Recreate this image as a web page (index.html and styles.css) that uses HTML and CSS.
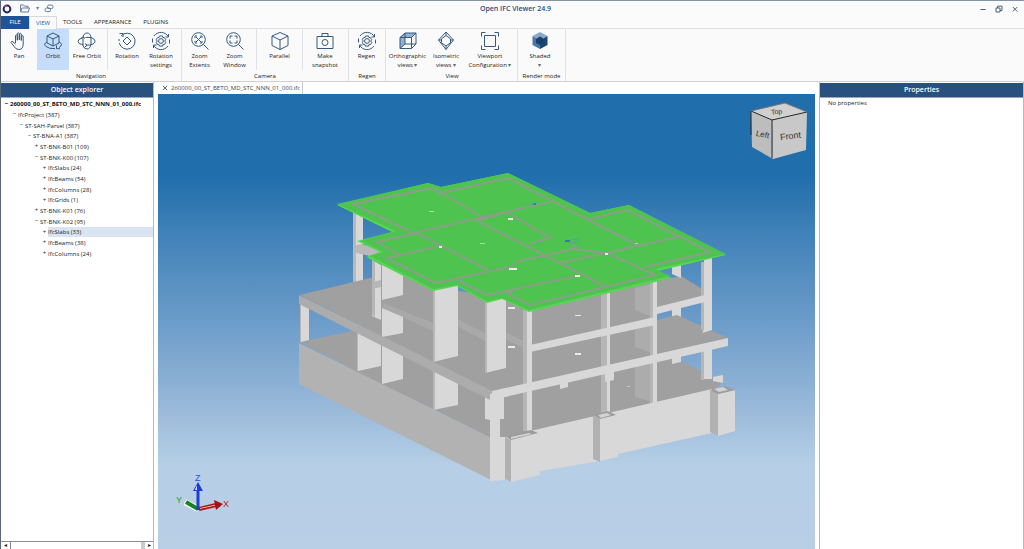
FILE: index.html
```html
<!DOCTYPE html>
<html lang="en">
<head>
<meta charset="utf-8">
<title>Open IFC Viewer 24.9</title>
<link rel="stylesheet" href="styles.css">
</head>
<body>
<div class="app">
  <header class="titlebar">
    <div class="quick">
      <svg class="logo" viewBox="0 0 10 10"><circle cx="5" cy="5" r="3.4" fill="none" stroke="#1d2a6b" stroke-width="2"/><path d="M2.2 3.2A3.4 3.4 0 0 1 5 1.6" fill="none" stroke="#b0486c" stroke-width="1.6"/></svg>
      <button class="quick-btn" aria-label="Open"><svg width="10" height="9" viewBox="0 0 10 9"><path d="M.6 8V1h3l1 1.200H8V4M.6 8L2 4h7.500L8.200 8z"/></svg></button>
      <button class="quick-btn caret" aria-label="Recent files">▾</button>
      <button class="quick-btn" aria-label="Link"><svg width="10" height="9" viewBox="0 0 10 9"><rect x="3.500" y="1" width="5.500" height="3.600" rx="1.500"/><rect x="1" y="4" width="5.500" height="3.600" rx="1.500"/></svg></button>
    </div>
    <h1 class="title">Open IFC Viewer 24.9</h1>
    <div class="window-buttons">
      <button aria-label="Minimize"><svg viewBox="0 0 8 8"><path d="M1.500 4.500h5"/></svg></button>
      <button aria-label="Restore"><svg viewBox="0 0 8 8"><path d="M1 3h4v4H1zM2.500 3V1.200H7V5.500H5"/></svg></button>
      <button aria-label="Close"><svg viewBox="0 0 8 8"><path d="M1.800 2l4.500 4.500M6.300 2L1.800 6.500"/></svg></button>
    </div>
  </header>

  <nav class="tabs">
    <button class="tab file">FILE</button>
    <button class="tab active">VIEW</button>
    <button class="tab">TOOLS</button>
    <button class="tab">APPEARANCE</button>
    <button class="tab">PLUGINS</button>
  </nav>

  <section class="ribbon">
    <div class="group navigation">
      <div class="tools">
        <button class="tool"><svg viewBox="0 0 20 20"><path d="M6.500 12V4.500q.9-1.500 1.800 0V9.500M8.300 9V2.500q1-1.500 2 0V9M10.300 9V3q1-1.400 2 0V9.500M12.300 9.500V5q1-1.300 1.900 0v8q0 5.500-4.500 5.500-3 0-4.500-3L2 11.500q.4-1.800 2-.6L6.500 13"/></svg><span>Pan</span></button>
        <button class="tool selected"><svg viewBox="0 0 20 20"><path d="M10 2l6 3v7l-6 3-6-3V5zM4 5l6 3 6-3M10 8v7M4 11Q0 13 3 15.500 6 18 12 17.600M16 11q5 2.500 0 5.500M13.500 14.500v3.200h3.500"/></svg><span>Orbit</span></button>
        <button class="tool"><svg viewBox="0 0 20 20"><path d="M6 7Q6.500 2 10 2t4.200 5M14 13q-.8 5-4 5t-4.200-4M5 7Q1 8 1 10.500T6 13.800M9 14.200q9 0 9-4Q18 8 15 7M8.500 6.500q4-.5 6 .3M6 6v8M14 6v7M4 7.500l2-1.700 2 1.700M8 12.500l2 1.700-2 1.800"/></svg><span>Free Orbit</span></button>
      </div>
      <div class="tools">
        <button class="tool"><svg viewBox="0 0 20 20"><path d="M4 5A8 8 0 1 1 2.300 12M6 2.500h-3.500M6 2.500V6M10 6l4 4-4 4-4-4zM2 8v2"/></svg><span>Rotation</span></button>
        <button class="tool"><svg viewBox="0 0 20 20"><use href="#gear"/></svg><span>Rotation<br>settings</span></button>
      </div>
      <h2 class="group-name">Navigation</h2>
    </div>
    <div class="group camera">
      <div class="tools">
        <button class="tool"><svg viewBox="0 0 20 20"><circle cx="8.500" cy="8.500" r="6.800"/><path d="M13.500 13.500l5 5M5 7V5h2M10 5h2v2M12 10v2h-2M7 12H5v-2M6 6l5 5M11 6l-5 5"/></svg><span>Zoom<br>Extents</span></button>
        <button class="tool"><svg viewBox="0 0 20 20"><circle cx="8.500" cy="8.500" r="6.800"/><path d="M13.500 13.500l5 5M5 7.500V5h2.500M9.500 5H12v2.500M12 9.500V12H9.500M7.500 12H5V9.500"/></svg><span>Zoom<br>Window</span></button>
      </div>
      <div class="tools">
        <button class="tool"><svg viewBox="0 0 20 20"><path d="M10 1.500l8 3.500v9.500l-8 4-8-4V5zM2 5l8 4 8-4M10 9v9.500"/></svg><span>Parallel</span></button>
      </div>
      <div class="tools">
        <button class="tool"><svg viewBox="0 0 20 20"><path d="M2 5.500h16v12H2zM7 5.500V2.500h6v3"/><circle cx="10" cy="11.500" r="3"/></svg><span>Make<br>snapshot</span></button>
      </div>
      <h2 class="group-name">Camera</h2>
    </div>
    <div class="group regen">
      <div class="tools">
        <button class="tool"><svg viewBox="0 0 20 20"><g id="gear"><path d="M3 5A8.500 8.500 0 0 1 17.500 6M17 15A8.500 8.500 0 0 1 2.500 14M14.500 6h3V3M5.500 14h-3v3M1.500 7.500v4M18.500 8.500v4"/><path d="M8.500 5h3l.4 1.500 1.600.2 1.200 2-1 1.300 1 1.500-1.200 2-1.600.2-.4 1.400h-3l-.5-1.400-1.600-.2-1.100-2 1-1.500-1-1.300 1.100-2 1.600-.2z"/><circle cx="10" cy="10" r="2.400"/></g></svg><span>Regen</span></button>
      </div>
      <h2 class="group-name">Regen</h2>
    </div>
    <div class="group view">
      <div class="tools">
        <button class="tool"><svg viewBox="0 0 20 20"><path class="tint" d="M2 6.500L7 2h11l-4.500 4.500z"/><path class="tint" d="M2 6.500L7 2v11l-5 4.500z"/><path d="M2 6.500h11.500v11H2zM13.500 6.500L18 2v11l-4.500 4.500M2 6.500L7 2M7 2h11M7 2v11L2 17.500M7 13h11"/></svg><span>Orthographic<br>views <i>▾</i></span></button>
        <button class="tool"><svg viewBox="0 0 20 20"><path d="M10 1l7.500 8-7.500 9.500L2.500 9z"/><path d="M10 4.500l4.500 3.300v4L10 15l-4.500-3.200v-4zM2.500 9h3M14.500 9h3M10 1v3.500M10 15v3.500"/></svg><span>Isometric<br>views <i>▾</i></span></button>
        <button class="tool"><svg viewBox="0 0 20 20"><path d="M4.500 4.500h11v11h-11zM1.500 5.500v-4h4M14.500 1.500h4v4M18.500 14.500v4h-4M5.500 18.500h-4v-4"/></svg><span>Viewport<br>Configuration <i>▾</i></span></button>
      </div>
      <h2 class="group-name">View</h2>
    </div>
    <div class="group render">
      <div class="tools">
        <button class="tool"><svg viewBox="0 0 20 20" class="solid"><path fill="#86a9cd" d="M10 1l7.500 4L10 9.500 2.500 5z"/><path fill="#4878aa" d="M2.500 5l7.500 4.500V18l-7.500-4z"/><path fill="#1d4674" d="M17.500 5L10 9.500V18l7.500-4z"/><path fill="#1b3f68" d="M10 5.500l4 2.500v4l-4 2-4-2V8z"/></svg><span>Shaded<br><i>▾</i></span></button>
      </div>
      <h2 class="group-name">Render mode</h2>
    </div>
  </section>

  <main class="workspace">
    <aside class="panel explorer">
      <h2 class="panel-title">Object explorer</h2>
      <ul class="tree">
        <li class="l0"><button>−</button><span>260000_00_ST_BETO_MD_STC_NNN_01_000.ifc</span></li>
        <li class="l1"><button>−</button><span>IfcProject (387)</span></li>
        <li class="l2"><button>−</button><span>ST-SAH-Parsel (387)</span></li>
        <li class="l3"><button>−</button><span>ST-BNA-A1 (387)</span></li>
        <li class="l4"><button>+</button><span>ST-BNK-B01 (109)</span></li>
        <li class="l4"><button>−</button><span>ST-BNK-K00 (107)</span></li>
        <li class="l5"><button>+</button><span>IfcSlabs (24)</span></li>
        <li class="l5"><button>+</button><span>IfcBeams (54)</span></li>
        <li class="l5"><button>+</button><span>IfcColumns (28)</span></li>
        <li class="l5"><button>+</button><span>IfcGrids (1)</span></li>
        <li class="l4"><button>+</button><span>ST-BNK-K01 (76)</span></li>
        <li class="l4"><button>−</button><span>ST-BNK-K02 (95)</span></li>
        <li class="l5 current"><button>+</button><span>IfcSlabs (33)</span></li>
        <li class="l5"><button>+</button><span>IfcBeams (38)</span></li>
        <li class="l5"><button>+</button><span>IfcColumns (24)</span></li>
      </ul>
      <div class="hscroll"><button aria-label="Scroll left">◂</button><span class="track"></span><button aria-label="Scroll right">▸</button></div>
    </aside>

    <section class="document">
      <div class="doc-tab"><button aria-label="Close document"><svg viewBox="0 0 7 7"><path d="M1 1l5 5M6 1L1 6"/></svg></button><span>260000_00_ST_BETO_MD_STC_NNN_01_000.ifc</span></div>
      <div class="canvas">
        <svg class="model" viewBox="158 94 657 455">
          <g fill="#a0a0a0">
            <path d="M300 342L357 330 657 355 686 363 723 383 712 390 530 432 491 438z"/>
            <path d="M657 281L681 276 704 290V297L657 308z"/>
          </g>
          <g fill="#d8d8d8">
            <path d="M672 264h9v14l-9-4zM672 304h9v14h-9zM355 210h8v74h-8z"/>
          </g>
          <path fill="#b9b9b9" d="M353 210h3v74h-3zM353 246l9-2 20 7v8l-29-7z"/>
          <path fill="#a0a0a0" d="M300 295L370 278 657 320 677 315 728 338 492 392z"/>
          <path fill="#a0a0a0" d="M381 262L433 290 487 300 527 311 657 281V401L530 431 491 437 344 366 357 330 370 325z"/>
          <path fill="#acacac" d="M635 288l18-4v33l-18-7zM635 326l18-5v32l-18-6zM635 363l18-5v44l-18-5z"/>
          <path fill="#a9a9a9" d="M383 303L433 323V331L383 308zM455 318L485 333V341L455 325zM503 331L530 344V351L503 338z"/>
          <g fill="#d8d8d8">
            <path d="M382 262l21 13v20l-21 5z"/>
            <path d="M382 308l21 9v16l-21 4z"/>
            <path d="M357 331l24 11v24l-23 5zM382 343l21 10v26l-21 5z"/>
            <path d="M433 371l25 12v22l-25 5z"/>
            <path d="M433 288l25-5v73l-25 6zM485 301l21-5v72l-21 5z"/>
            <path d="M485 396h5v24l-5-1z"/>
            <path d="M300 303l9 4v33l-8 2z"/>
            <path d="M372 260l9 5v55l-9-4z"/>
          </g>
          <path fill="#b7b7b7" d="M372 258h3v59l-3-2zM433 289h2v73h-2zM485 301h2v72h-2zM433 371h2v39h-2zM357 331h1v40h-1zM372 282l9-2v7l-9 2zM300 303h1v39h-1z"/>
          <path fill="#acacac" d="M299 295L492 391V401L299 304z"/>
          <path fill="#b2b2b2" d="M299 343L491 438V480L299 384z"/>
          <path fill="#b6b6b6" d="M523 310h5v121h-5zM601 294h6v122h-6zM650 283h3v121h-3zM701 262h3v68h-3zM701 350h3v30h-3z"/>
          <g fill="#d8d8d8">
            <path d="M527 309h5v122h-5zM607 292h3v122h-3zM653 280h4v123h-4z"/>
            <path d="M704 257h8v73l-10 3 2-4zM704 345h8v34h-8z"/>
            <path d="M530 345L655 317V325L530 352zM657 307L705 295V302L657 314z"/>
            <path d="M492 391L728 338V346L492 400z"/>
            <path d="M490 394l14-3v89l-14 1zM560 378l8-2v11l-8 2zM605 370h9v10l-9 2zM672 357l9-2v7l-9 2z"/>
            <path d="M504 437L530 431 712 389V433L618 454V457L600 461 540 471V475L511 482 504 479z"/>
            <path d="M713 377l10-2v8l-10-2z"/>
          </g>
          <path fill="#a0a0a0" d="M504 398l3-1v40h-7v-18h4z"/>
          <g>
            <path fill="#b1b1b1" d="M505 437l6 3v42l-6-3zM593 415l7 4v43l-7-3zM710 390l8 4v41l-8-3z"/>
            <path fill="#d8d8d8" d="M511 440l26-7v39l-26 10zM600 419l16-4v39l-16 7zM718 394l17-4v41l-17 5z"/>
            <path fill="#9c9c9c" d="M505 436l26-6 7 3-27 7zM593 415l15-4 8 4-16 4zM710 390l15-4 10 4-17 4z"/>
            <path fill="#d2d2d2" d="M511 437l18-4 3 1-21 5zM598 415l9-2 4 2-10 3zM714 389l9-2 5 3-9 2z"/>
          </g>
          <path class="roof-edge" d="M337 205L428 183 441 187 508 173 590 213 629 205 726 255 658 271 672 278 529 312 502 299 487 303 457 286 433 291 366 257 380 252 357 241 392 232z"/>
          <path class="roof" d="M337 204L428 183 441 187 508 173 590 213 629 205 726 254 655 269 670 276 529 310 502 298 487 301 457 285 433 289 370 256 384 252 361 241 396 231z"/>
          <g class="walls">
            <path d="M413 233L353 204 433 188 482 217M437 194L508 178 637 245M413 233L550 202M400 255L377 242 417 233 488 270M435 283L387 258 440 246M435 283L510 267 520 261 573 249 607 253 677 237M477 221L607 287M477 221L507 212 550 238 530 244M457 280L487 295 577 276M590 219L627 210 710 252 645 267M560 263L607 253 655 275 530 305 507 293 515 290M570 240L577 249"/>
          </g>
          <path class="specks" d="M508 218h5v2h-5zM439 246h3v2h-3zM509 268h8v2h-8zM508 307h7v2h-7zM575 275h5v2h-5zM605 253h3v2h-3zM575 315h6v1h-6zM575 353h6v2h-6zM508 346h7v2h-7z"/>
          <path fill="#a5dda3" d="M480 243h5v1h-5zM429 211h5v1h-5zM635 243h3v1h-3zM627 386h3v1h-3z"/>
          <path fill="#2c7f9c" d="M533 203h3v2h-3zM565 240h5v2h-5z"/>
          <path fill="none" stroke="#48ad92" d="M529 205l8-3M569 243l9-1v-3l-8 1"/>
        </svg>
        <svg class="cube" viewBox="748 100 62 62">
          <path fill="#d0d0d0" d="M751 111L785 103 807 112 772 120z"/>
          <path fill="#bdbdbd" d="M751 111L772 120 773 159 752 147z"/>
          <path fill="#c8c8c8" d="M772 120L807 112 806 150 773 159z"/>
          <path fill="none" stroke="#2b2b2b" d="M751 135V111M751 111L772 120V158M772 120L807 112"/>
          <path fill="none" stroke="#777" d="M751 111L785 103 807 112"/>
          <text x="771" y="114" font-size="7" transform="rotate(-6 778 112)">Top</text>
          <text x="756" y="137" font-size="8" transform="rotate(12 762 134)">Left</text>
          <text x="780" y="139" font-size="9" transform="rotate(-7 790 136)">Front</text>
        </svg>
        <svg class="axes" viewBox="174 470 60 46">
          <path d="M198 509L185 502" stroke="#fff" stroke-width="6"/>
          <path d="M198 509L186 502" stroke="#15841f" stroke-width="4"/>
          <path d="M199 509L216 505" stroke="#b01414" stroke-width="4"/><path d="M200 508.500L216 505" stroke="#e6b0b0"/>
          <path d="M214 500l9 4-7 6z" fill="#a31212"/>
          <path d="M198 510V489" stroke="#1c3fd0" stroke-width="3"/>
          <path d="M198 482l5 9h-10z" fill="#1c3fd0"/><path d="M197 485v5h-2z" fill="#dce6ff"/>
          <text x="195" y="481" fill="#2a4fd8">Z</text><text x="223" y="507" fill="#b82020">X</text><text x="176" y="503" fill="#1f9a35">Y</text>
        </svg>
      </div>
    </section>

    <aside class="panel properties">
      <h2 class="panel-title">Properties</h2>
      <p class="empty">No properties</p>
    </aside>
  </main>
</div>
</body>
</html>
```
FILE: styles.css
```css
* { box-sizing: border-box; margin: 0; padding: 0; }

body {
  font-family: "Open Sans", "Noto Sans", sans-serif;
  font-size: 6px;
  line-height: 9px;
  color: #222;
  background: #fff;
}

button { font: inherit; color: inherit; background: none; border: 0; }
svg { display: block; }

.app {
  display: flex;
  flex-direction: column;
  height: 100vh;
  border-top: 1px solid #8593a6;
  border-left: 1px solid #5b6675;
}

.titlebar {
  display: grid;
  grid-template-columns: 1fr auto 1fr;
  align-items: center;
  height: 15px;
  flex: none;
  background: #fbfbfc;
}
.quick { display: flex; align-items: center; padding-left: 1px; }
.logo { width: 10px; height: 10px; margin-right: 8px; }
.quick-btn svg { fill: none; stroke: #5f7f9f; }
.caret { width: 14px; color: #5f7f9f; }
.title { padding-left: 6px; font-size: 7px; font-weight: 600; color: #274e7d; }
.window-buttons { display: flex; justify-content: flex-end; gap: 8px; padding-right: 5px; }
.window-buttons svg { width: 8px; height: 8px; fill: none; stroke: #46627f; }

.tabs {
  display: flex;
  flex: none;
  height: 13px;
  background: #fbfbfc;
  border-bottom: 1px solid #dcdfe3;
}
.tab { padding: 0 6px; height: 13px; }
.file { width: 28px; padding: 0; background: #1f5496; color: #fff; }
.active { width: 28px; padding: 0; color: #2c5f9c; background: #fafafa; border: 1px solid #d5d8dc; border-bottom: 0; }

.ribbon {
  display: flex;
  flex: none;
  height: 53px;
  background: #fafafa;
  border-bottom: 1px solid #cfd0d6;
}
.group { display: flex; flex-wrap: wrap; align-content: flex-start; border-right: 1px solid #dfe1e5; }
.tools { display: flex; height: 41px; }
.tools + .tools { border-left: 1px solid #dfe1e5; }
.group-name { width: 100%; font-size: 6px; font-weight: 400; text-align: center; line-height: 12px; }
.navigation { width: 181px; }
.camera { width: 167px; }
.regen { width: 37px; }
.view { width: 132px; padding-left: 1px; }
.render { width: 48px; }

.tool { display: flex; flex-direction: column; align-items: center; width: 36px; padding-top: 2px; }
.tool svg { width: 20px; height: 20px; margin-bottom: 1px; fill: none; stroke: #35597f; stroke-width: 1; }
.tool .solid { stroke: none; }
.tool .tint { fill: #8fb0d3; stroke: none; }
.tool span { text-align: center; white-space: nowrap; }
.tool i { font-style: normal; color: #666; }
.tool.selected { width: 32px; background: #c5dcfa; }
.navigation .tools:first-child { padding-right: 2px; }
.navigation .tools:nth-child(2) { padding-left: 2px; }
.navigation .tools:nth-child(2) .tool { width: 34px; }
.camera .tools:first-child { padding-right: 4px; }
.camera .tools:first-child .tool { width: 35px; }
.camera .tools:nth-child(2) .tool { width: 45px; }
.camera .tools:nth-child(3) .tool { width: 44px; }
.regen .tool { width: 35px; }
.view .tool:first-child { width: 41px; }
.view .tool:last-child { width: 52px; }
.render .tool { width: 44px; }

.workspace { display: flex; flex: 1; min-height: 0; gap: 4px; }
.panel { display: flex; flex-direction: column; padding-top: 1px; border-right: 1px solid #b5b9bf; }
.panel-title {
  flex: none;
  font-size: 7px;
  font-weight: 600;
  line-height: 14px;
  text-align: center;
  color: #fff;
  background: #28517f;
  border-bottom: 1px solid #9aa6b5;
}
.explorer { width: 153px; flex: none; }
.properties { width: 205px; flex: none; border-left: 1px solid #b5b9bf; }
.empty { padding: 1px 8px; }

.tree { display: grid; grid-template-columns: 100%; grid-auto-rows: 1fr; min-height: 160px; margin-top: 1px; list-style: none; }
.tree li { display: flex; align-items: center; white-space: nowrap; }
.tree button { width: 7px; flex: none; }
.tree span { flex: 1; line-height: 10px; }
.tree .l0 { padding-left: 2px; font-weight: 700; color: #111; }
.l1 { padding-left: 10px; }
.l2 { padding-left: 17px; }
.l3 { padding-left: 25px; }
.l4 { padding-left: 32px; }
.l5 { padding-left: 40px; }
.current span { background: #dae3f2; }

.hscroll { display: flex; height: 8px; margin-top: auto; border-top: 1px solid #8d8d8d; }
.hscroll button { width: 9px; line-height: 7px; }
.hscroll button:last-child { width: 8px; }
.track { flex: 1; border-left: 1px solid #888; border-right: 4px solid #ccc; }

.document { display: flex; flex-direction: column; flex: 1; min-width: 0; }
.doc-tab { display: flex; align-items: center; align-self: flex-start; gap: 3px; height: 12px; padding: 0 2px 0 4px; border-right: 1px solid #ccc; color: #444; }
.doc-tab svg { width: 6px; height: 6px; stroke: #1f4f86; stroke-width: 1; }

.canvas {
  position: relative;
  flex: 1;
  min-height: 0;
  background: linear-gradient(#206eac 0%, #206eac 18%, #3f81b8 30%, #6095c5 45%, #8db1d5 64%, #b7cfe6 82%, #b8cfe6 100%);
}
.model { width: 100%; height: 100%; }
.roof { fill: #4fc34f; }
.roof-edge { fill: #56d653; }
.walls { fill: none; stroke: #8a9f88; stroke-width: 2; }
.specks { fill: #e6efe6; }
.cube { position: absolute; top: 6px; right: 5px; width: 62px; height: 62px; fill: #333; font-family: "Liberation Sans", sans-serif; }
.axes { position: absolute; left: 16px; bottom: 33px; width: 60px; height: 46px; font-family: "Liberation Sans", sans-serif; font-size: 9px; }
```
